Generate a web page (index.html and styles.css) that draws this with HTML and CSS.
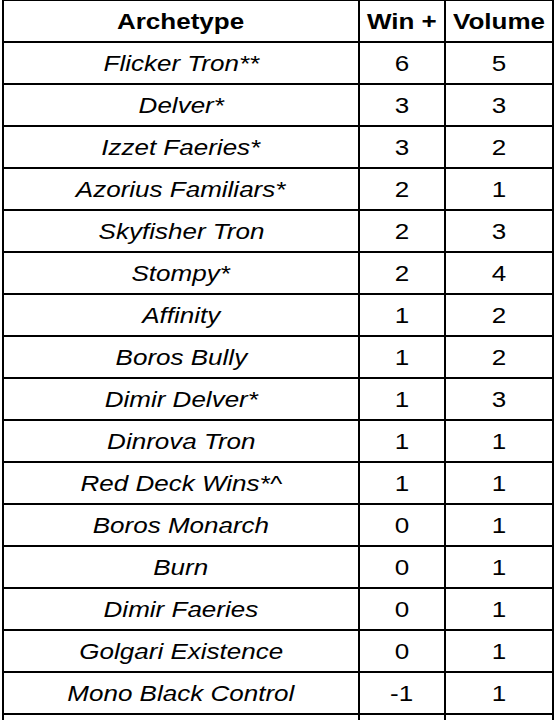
FILE: index.html
```html
<!DOCTYPE html>
<html>
<head>
<meta charset="utf-8">
<link rel="stylesheet" href="styles.css">
</head>
<body>
<table class="sheet">
  <thead>
    <tr>
      <th class="c-name"><span class="t">Archetype</span></th>
      <th class="c-win"><span class="t">Win +</span></th>
      <th class="c-vol"><span class="t">Volume</span></th>
    </tr>
  </thead>
  <tbody>
    <tr><td class="name"><span class="t">Flicker Tron**</span></td><td><span class="t">6</span></td><td><span class="t">5</span></td></tr>
    <tr><td class="name"><span class="t">Delver*</span></td><td><span class="t">3</span></td><td><span class="t">3</span></td></tr>
    <tr><td class="name"><span class="t">Izzet Faeries*</span></td><td><span class="t">3</span></td><td><span class="t">2</span></td></tr>
    <tr><td class="name"><span class="t">Azorius Familiars*</span></td><td><span class="t">2</span></td><td><span class="t">1</span></td></tr>
    <tr><td class="name"><span class="t">Skyfisher Tron</span></td><td><span class="t">2</span></td><td><span class="t">3</span></td></tr>
    <tr><td class="name"><span class="t">Stompy*</span></td><td><span class="t">2</span></td><td><span class="t">4</span></td></tr>
    <tr><td class="name"><span class="t">Affinity</span></td><td><span class="t">1</span></td><td><span class="t">2</span></td></tr>
    <tr><td class="name"><span class="t">Boros Bully</span></td><td><span class="t">1</span></td><td><span class="t">2</span></td></tr>
    <tr><td class="name"><span class="t">Dimir Delver*</span></td><td><span class="t">1</span></td><td><span class="t">3</span></td></tr>
    <tr><td class="name"><span class="t">Dinrova Tron</span></td><td><span class="t">1</span></td><td><span class="t">1</span></td></tr>
    <tr><td class="name"><span class="t">Red Deck Wins*^</span></td><td><span class="t">1</span></td><td><span class="t">1</span></td></tr>
    <tr><td class="name"><span class="t">Boros Monarch</span></td><td><span class="t">0</span></td><td><span class="t">1</span></td></tr>
    <tr><td class="name"><span class="t">Burn</span></td><td><span class="t">0</span></td><td><span class="t">1</span></td></tr>
    <tr><td class="name"><span class="t">Dimir Faeries</span></td><td><span class="t">0</span></td><td><span class="t">1</span></td></tr>
    <tr><td class="name"><span class="t">Golgari Existence</span></td><td><span class="t">0</span></td><td><span class="t">1</span></td></tr>
    <tr><td class="name"><span class="t">Mono Black Control</span></td><td><span class="t">-1</span></td><td><span class="t">1</span></td></tr>
    <tr><td class="name"></td><td></td><td></td></tr>
  </tbody>
</table>
</body>
</html>
```
FILE: styles.css
```css
html, body {
  height: 100%;
  overflow: hidden;
}
body {
  margin: 0;
  background: #fff;
  font-family: "Liberation Sans", Arial, sans-serif;
  color: #000;
}
.sheet {
  border-collapse: separate;
  border-spacing: 0;
  table-layout: fixed;
  width: 552px;
  margin: -1px 0 0 2px;
  border-top: 2px solid #000;
  border-left: 2px solid #000;
}
.sheet th,
.sheet td {
  box-sizing: border-box;
  height: 42px;
  padding: 3px 0 0;
  border-right: 2px solid #000;
  border-bottom: 2px solid #000;
  text-align: center;
  vertical-align: middle;
  font-size: 21.5px;
  line-height: 25px;
  white-space: nowrap;
}
.sheet th {
  font-weight: bold;
}
.c-name { width: 356px; }
.c-win { width: 86px; }
.c-vol { width: 108px; }
.name {
  font-style: italic;
}
.t {
  display: inline-block;
  transform: scaleX(1.21);
}
```
